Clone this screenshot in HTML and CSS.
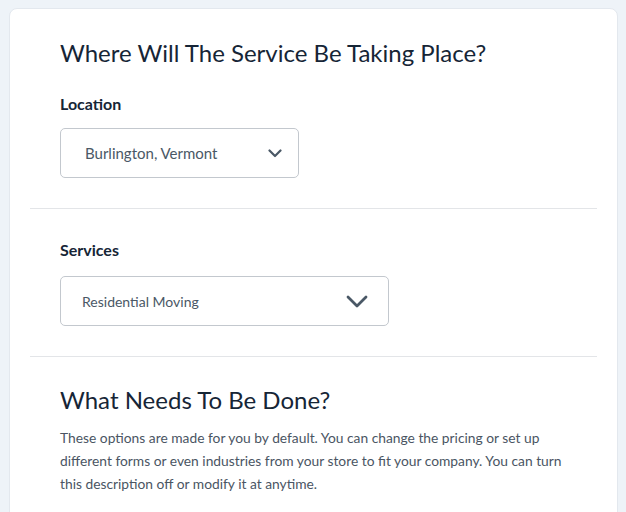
FILE: index.html
```html
<!DOCTYPE html>
<html>
<head>
<meta charset="utf-8">
<link rel="stylesheet" href="styles.css">
</head>
<body>
<div class="card">
  <section class="section sec1">
    <h2 class="title">Where Will The Service Be Taking Place?</h2>
    <div class="label">Location</div>
    <div class="select select-loc">
      <span>Burlington, Vermont</span>
      <svg class="chev" width="14" height="9" viewBox="0 0 14 9"><path d="M1.5 1.5 L7 7 L12.5 1.5" fill="none" stroke="#4a5866" stroke-width="2.2" stroke-linecap="round" stroke-linejoin="round"/></svg>
    </div>
  </section>
  <hr class="divider">
  <section class="section sec2">
    <div class="label">Services</div>
    <div class="select select-svc">
      <span>Residential Moving</span>
      <svg class="chev" width="22" height="13" viewBox="0 0 22 13"><path d="M2 2 L11 11 L20 2" fill="none" stroke="#4a5866" stroke-width="2.8" stroke-linecap="round" stroke-linejoin="round"/></svg>
    </div>
  </section>
  <hr class="divider">
  <section class="section sec3">
    <h2 class="title">What Needs To Be Done?</h2>
    <p class="desc">These options are made for you by default. You can change the pricing or set up different forms or even industries from your store to fit your company. You can turn this description off or modify it at anytime.</p>
  </section>
</div>
</body>
</html>
```
FILE: styles.css
```css
html, body {
  margin: 0;
  padding: 0;
  background: #eef3f8;
  font-family: Lato, "Open Sans", sans-serif;
}
body {
  padding: 8px 8px 0 9px;
  height: 512px;
  box-sizing: border-box;
  overflow: hidden;
}
.card {
  background: #fff;
  border: 1px solid #e3e8ee;
  border-radius: 8px;
  padding: 0 20px;
  height: 540px;
  width: 609px;
  box-sizing: border-box;
}
.section {
  padding: 28px 30px 30px;
}
.title {
  margin: 0;
  font-size: 24px;
  font-weight: 400;
  color: #162536;
  line-height: 32px;
}
.label {
  margin-top: 24px;
  font-size: 16px;
  font-weight: 700;
  color: #162536;
  line-height: 20px;
}
.sec1 .label {
  margin-top: 25px;
}
.select {
  margin-top: 15px;
  border: 1px solid #c3c8ce;
  border-radius: 5px;
  height: 50px;
  box-sizing: border-box;
  display: flex;
  align-items: center;
  justify-content: space-between;
  color: #4a5866;
}
.sec1 .select {
  margin-top: 14px;
}
.select-loc {
  width: 239px;
  padding: 0 16px 0 24px;
  font-size: 15px;
}
.select-svc {
  width: 329px;
  padding: 0 20px 0 21px;
  font-size: 14px;
}
.divider {
  border: 0;
  border-top: 1px solid #e3e5e8;
  margin: 0;
}
.sec2 {
  padding-top: 7px;
}
.sec2 .select {
  margin-top: 16px;
}
.sec3 {
  padding-top: 27px;
}
.desc {
  margin: 10px 0 0;
  font-size: 13.8px;
  line-height: 23px;
  color: #4a5563;
}
```
